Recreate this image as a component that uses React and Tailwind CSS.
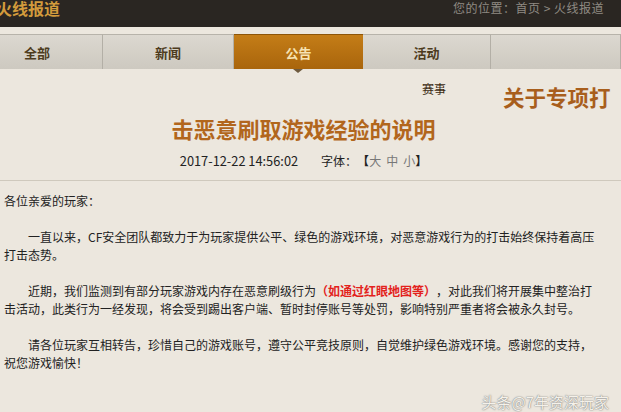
import React from "react";

const FONT = { fontFamily: '"Noto Sans CJK SC", "Noto Sans", sans-serif' };

function Tab({ label, active, w }) {
  if (active) {
    return (
      <div className={`relative ${w} h-full flex items-center justify-center bg-gradient-to-b from-[#c47d17] to-[#a9650c] border-t border-[#8d5508]`}>
        <span className="text-[13px] font-bold text-[#f6e3b3] leading-none">{label}</span>
        <span className="absolute left-1/2 -translate-x-1/2 top-full w-0 h-0 border-l-[5px] border-r-[5px] border-t-[4px] border-l-transparent border-r-transparent border-t-[#6e5a3e]"></span>
      </div>
    );
  }
  return (
    <div className={`${w} h-full flex items-center justify-center bg-gradient-to-b from-[#dcd8d0] to-[#cdc9c0] border-t border-[#b7b3aa] border-r border-r-[#b3afa6]`}>
      <span className="text-[13px] font-bold text-[#4d3b1d] leading-none">{label}</span>
    </div>
  );
}

export default function App() {
  return (
    <div className="w-[621px] h-[412px] overflow-hidden bg-[#ece7de] flex flex-col [text-spacing-trim:space-all]" style={FONT}>
      <div className="h-[27px] bg-[#2a2622] flex justify-between items-start shrink-0">
        <span className="ml-[-4px] mt-[-2px] text-[16px] font-bold text-[#d39b3c] leading-[21px]">火线报道</span>
        <span className="mr-[17px] text-[12px] text-[#8f8a82] leading-[16px] tracking-[0.5px]">您的位置：首页 &gt; 火线报道</span>
      </div>
      <div className="mt-[7px] h-[35px] flex shrink-0 ml-[-28px]">
        <Tab label="全部" w="w-[133px]" />
        <Tab label="新闻" w="w-[133px]" />
        <Tab label="公告" w="w-[131px]" active />
        <Tab label="活动" w="w-[130px]" />
        <Tab label="" w="w-[132px]" />
      </div>
      <div className="flex items-start h-[42px] shrink-0">
        <span className="ml-[422px] mt-[14px] text-[12px] text-[#3b2a12] leading-none">赛事</span>
        <span className="ml-[57px] mt-[17px] text-[21.5px] font-bold text-[#a85e1c] leading-none whitespace-nowrap">关于专项打</span>
      </div>
      <div className="pr-[14px] text-center text-[22px] font-bold text-[#b2661c] leading-[26px] mt-[4px]">
        击恶意刷取游戏经验的说明
      </div>
      <div className="pr-[14px] mt-[12px] flex justify-center items-center text-[12px] text-[#222] leading-[16px]">
        <span className="text-[12.8px]">2017-12-22 14:56:02</span>
        <span className="ml-[23px]">字体：</span>
        <span className="font-bold">【</span>
        <span className="text-[#777]">大</span>
        <span className="ml-[5px] text-[#777]">中</span>
        <span className="ml-[5px] text-[#777]">小</span>
        <span className="font-bold">】</span>
      </div>
      <div className="mt-[11px] border-t border-[#cfc9bd]"></div>
      <div className="pl-[4px] w-[600px] text-[12px] text-[#222] leading-[18px] mt-[11px]">
        <p>各位亲爱的玩家：</p>
        <p className="mt-[18px] indent-[24px]">
          一直以来，CF安全团队都致力于为玩家提供公平、绿色的游戏环境，对恶意游戏行为的打击始终保持着高压打击态势。
        </p>
        <p className="mt-[18px] indent-[24px]">
          近期，我们监测到有部分玩家游戏内存在恶意刷级行为<span className="text-[#e3221c] font-bold">（如通过红眼地图等）</span>，对此我们将开展集中整治打击活动，此类行为一经发现，将会受到踢出客户端、暂时封停账号等处罚，影响特别严重者将会被永久封号。
        </p>
        <p className="mt-[18px] indent-[24px]">
          请各位玩家互相转告，珍惜自己的游戏账号，遵守公平竞技原则，自觉维护绿色游戏环境。感谢您的支持，祝您游戏愉快！
        </p>
      </div>
      <div className="flex justify-end pr-[12px] mt-[22px]">
        <span className="text-[15px] text-[#f4f1ea] leading-none" style={{ textShadow: "0 0 1px #777, 0 0 2px #999" }}>头条@7年资深玩家</span>
      </div>
    </div>
  );
}
